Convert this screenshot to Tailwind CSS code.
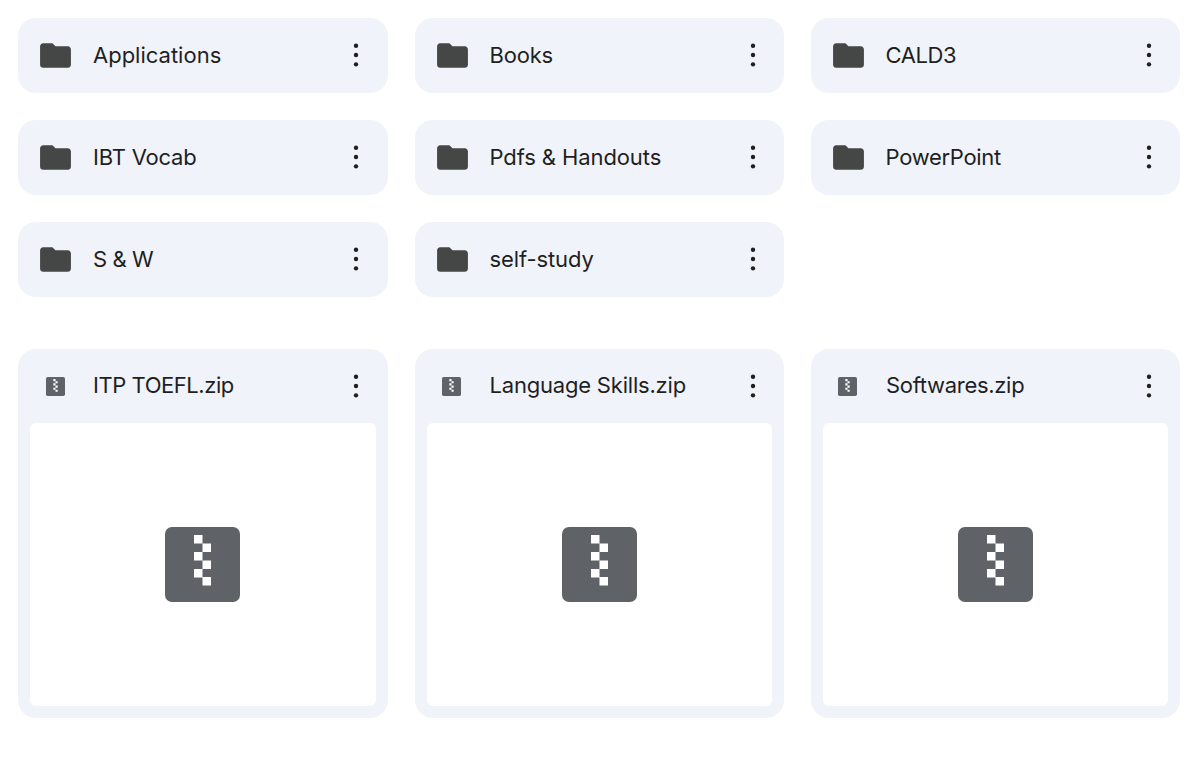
<!DOCTYPE html>
<html lang="en">
  <head>
    <meta charset="UTF-8" />
    <meta name="viewport" content="width=device-width, initial-scale=1.0" />
    <title>Drive</title>
    <script src="https://cdn.jsdelivr.net/npm/@tailwindcss/browser@4"></script>
  </head>
  <body class="bg-white text-[#1f1f1f] font-['Inter',sans-serif] text-[22px] h-[759px] overflow-hidden">
    <svg class="hidden">
      <symbol id="folder" viewBox="0 0 24 24"><path d="M10 4H4c-1.1 0-2 .9-2 2v12c0 1.1.9 2 2 2h16c1.100 0 2-.9 2-2V8c0-1.100-.9-2-2-2h-8l-2-2z" /></symbol>
      <symbol id="more" viewBox="0 0 24 24"><circle cx="12" cy="5.8" r="1.45" /><circle cx="12" cy="12" r="1.45" /><circle cx="12" cy="18.2" r="1.45" /></symbol>
      <symbol id="zip" viewBox="0 0 75 75">
        <rect width="75" height="75" rx="7" fill="#5f6368" />
        <path fill="#fff" d="M29 8h8.500v8.500H29zM37.500 16.500H46V25h-8.500zM29 25h8.500v8.500H29zM37.500 33.500H46V42h-8.500zM29 42h8.500v8.500H29zM37.500 50h8.500v8.500h-8.500z" />
      </symbol>
    </svg>

    <div class="px-[18px] pt-[18px] w-[1198px]">
      <!-- folders -->
      <div class="grid grid-cols-[370px_369px_369px] gap-x-[27px] gap-y-[27.5px]">
        <div class="h-[74.5px] rounded-[18px] bg-[#f0f3fa] flex items-center pl-[19px] pr-[14px]">
          <svg class="w-[37px] h-[37px] fill-[#444746] shrink-0"><use href="#folder" /></svg>
          <span class="ml-[19px] flex-1">Applications</span>
          <svg class="w-[36px] h-[36px] fill-[#1f1f1f] shrink-0"><use href="#more" /></svg>
        </div>
        <div class="h-[74.5px] rounded-[18px] bg-[#f0f3fa] flex items-center pl-[18.5px] pr-[13px]">
          <svg class="w-[37px] h-[37px] fill-[#444746] shrink-0"><use href="#folder" /></svg>
          <span class="ml-[19px] flex-1 tracking-[-0.2px]">Books</span>
          <svg class="w-[36px] h-[36px] fill-[#1f1f1f] shrink-0"><use href="#more" /></svg>
        </div>
        <div class="h-[74.5px] rounded-[18px] bg-[#f0f3fa] flex items-center pl-[18.5px] pr-[13px]">
          <svg class="w-[37px] h-[37px] fill-[#444746] shrink-0"><use href="#folder" /></svg>
          <span class="ml-[19px] flex-1 tracking-[-0.4px]">CALD3</span>
          <svg class="w-[36px] h-[36px] fill-[#1f1f1f] shrink-0"><use href="#more" /></svg>
        </div>
        <div class="h-[74.5px] rounded-[18px] bg-[#f0f3fa] flex items-center pl-[19px] pr-[14px]">
          <svg class="w-[37px] h-[37px] fill-[#444746] shrink-0"><use href="#folder" /></svg>
          <span class="ml-[19px] flex-1 tracking-[-0.2px]">IBT Vocab</span>
          <svg class="w-[36px] h-[36px] fill-[#1f1f1f] shrink-0"><use href="#more" /></svg>
        </div>
        <div class="h-[74.5px] rounded-[18px] bg-[#f0f3fa] flex items-center pl-[18.5px] pr-[13px]">
          <svg class="w-[37px] h-[37px] fill-[#444746] shrink-0"><use href="#folder" /></svg>
          <span class="ml-[19px] flex-1 tracking-[-0.1px]">Pdfs &amp; Handouts</span>
          <svg class="w-[36px] h-[36px] fill-[#1f1f1f] shrink-0"><use href="#more" /></svg>
        </div>
        <div class="h-[74.5px] rounded-[18px] bg-[#f0f3fa] flex items-center pl-[18.5px] pr-[13px]">
          <svg class="w-[37px] h-[37px] fill-[#444746] shrink-0"><use href="#folder" /></svg>
          <span class="ml-[19px] flex-1 tracking-[-0.3px]">PowerPoint</span>
          <svg class="w-[36px] h-[36px] fill-[#1f1f1f] shrink-0"><use href="#more" /></svg>
        </div>
        <div class="h-[74.5px] rounded-[18px] bg-[#f0f3fa] flex items-center pl-[19px] pr-[14px]">
          <svg class="w-[37px] h-[37px] fill-[#444746] shrink-0"><use href="#folder" /></svg>
          <span class="ml-[19px] flex-1 tracking-[-0.4px]">S &amp; W</span>
          <svg class="w-[36px] h-[36px] fill-[#1f1f1f] shrink-0"><use href="#more" /></svg>
        </div>
        <div class="h-[74.5px] rounded-[18px] bg-[#f0f3fa] flex items-center pl-[18.5px] pr-[13px]">
          <svg class="w-[37px] h-[37px] fill-[#444746] shrink-0"><use href="#folder" /></svg>
          <span class="ml-[19px] flex-1 tracking-[-0.1px]">self-study</span>
          <svg class="w-[36px] h-[36px] fill-[#1f1f1f] shrink-0"><use href="#more" /></svg>
        </div>
      </div>

      <!-- files -->
      <div class="grid grid-cols-[370px_369px_369px] gap-x-[27px] mt-[52.500px]">
        <div class="h-[369px] rounded-[18px] bg-[#f0f3fa] flex flex-col px-[12px] pb-[12px]">
          <div class="h-[74px] flex items-center pl-[16px] pr-[2px] shrink-0">
            <svg class="w-[19px] h-[19px] shrink-0"><use href="#zip" /></svg>
            <span class="ml-[28px] mb-[2px] flex-1 tracking-[-0.45px]">ITP TOEFL.zip</span>
            <svg class="w-[36px] h-[36px] fill-[#1f1f1f] shrink-0"><use href="#more" /></svg>
          </div>
          <div class="flex-1 bg-white rounded-[6px] flex items-center justify-center pr-[1px]">
            <svg class="w-[75px] h-[75px]"><use href="#zip" /></svg>
          </div>
        </div>
        <div class="h-[369px] rounded-[18px] bg-[#f0f3fa] flex flex-col px-[12px] pb-[12px]">
          <div class="h-[74px] flex items-center pl-[15px] pr-[1px] shrink-0">
            <svg class="w-[19px] h-[19px] shrink-0"><use href="#zip" /></svg>
            <span class="ml-[28.5px] mb-[2px] flex-1 tracking-[-0.2px]">Language Skills.zip</span>
            <svg class="w-[36px] h-[36px] fill-[#1f1f1f] shrink-0"><use href="#more" /></svg>
          </div>
          <div class="flex-1 bg-white rounded-[6px] flex items-center justify-center">
            <svg class="w-[75px] h-[75px]"><use href="#zip" /></svg>
          </div>
        </div>
        <div class="h-[369px] rounded-[18px] bg-[#f0f3fa] flex flex-col px-[12px] pb-[12px]">
          <div class="h-[74px] flex items-center pl-[15px] pr-[1px] shrink-0">
            <svg class="w-[19px] h-[19px] shrink-0"><use href="#zip" /></svg>
            <span class="ml-[29px] mb-[2px] flex-1 tracking-[-0.3px]">Softwares.zip</span>
            <svg class="w-[36px] h-[36px] fill-[#1f1f1f] shrink-0"><use href="#more" /></svg>
          </div>
          <div class="flex-1 bg-white rounded-[6px] flex items-center justify-center">
            <svg class="w-[75px] h-[75px]"><use href="#zip" /></svg>
          </div>
        </div>
      </div>
    </div>
  </body>
</html>
